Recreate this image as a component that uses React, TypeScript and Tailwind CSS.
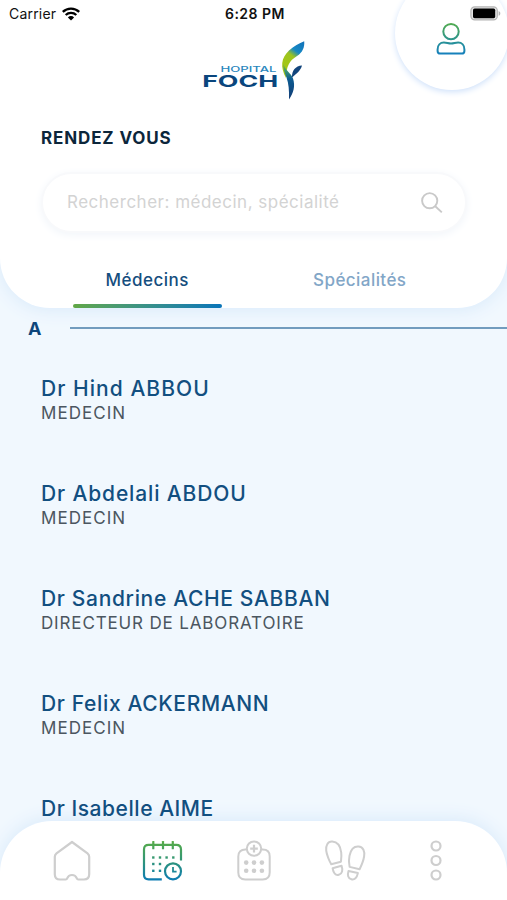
interface Doctor {
  name: string;
  role: string;
  nameClass: string;
  roleClass: string;
}

const doctors: Doctor[] = [
  { name: 'Dr Hind ABBOU', role: 'MEDECIN', nameClass: 'tracking-[1.05px]', roleClass: 'tracking-[1.05px]' },
  { name: 'Dr Abdelali ABDOU', role: 'MEDECIN', nameClass: 'tracking-[0.86px]', roleClass: 'tracking-[1.05px]' },
  { name: 'Dr Sandrine ACHE SABBAN', role: 'DIRECTEUR DE LABORATOIRE', nameClass: 'tracking-[0.66px]', roleClass: 'tracking-[0.85px]' },
  { name: 'Dr Felix ACKERMANN', role: 'MEDECIN', nameClass: 'tracking-[0.64px]', roleClass: 'tracking-[1.05px]' },
  { name: 'Dr Isabelle AIME', role: 'MEDECIN', nameClass: 'tracking-[0.54px]', roleClass: 'tracking-[1.05px]' },
];

function WifiIcon() {
  return (
    <svg width="18" height="14" viewBox="0 0 18 14" fill="none" stroke="#000" strokeWidth="2.3">
      <path d="M0.8 4.9a11.7 11.7 0 0 1 16.4 0" />
      <path d="M3.7 8a7.6 7.6 0 0 1 10.6 0" />
      <path d="M9 13.6L5.9 10.4a4.4 4.4 0 0 1 6.2 0z" fill="#000" stroke="none" />
    </svg>
  );
}

function BatteryIcon() {
  return (
    <svg width="31" height="15" viewBox="0 0 31 15">
      <rect x="0.9" y="0.9" width="26.4" height="13" rx="3.8" fill="#e4e4e4" stroke="#b4b4b4" strokeWidth="1.2" />
      <rect x="3" y="2.6" width="22.2" height="9.6" rx="1.6" fill="#000" />
      <path d="M28.6 5v4.8c1-.4 1.7-1.3 1.7-2.4s-.7-2-1.7-2.4z" fill="#b4b4b4" />
    </svg>
  );
}

function FochLogo() {
  return (
    <svg width="106" height="62" viewBox="0 0 106 62" role="img" aria-label="Hopital Foch">
      <defs>
        <linearGradient id="leaf" x1="84" y1="28" x2="103" y2="3" gradientUnits="userSpaceOnUse">
          <stop offset="0" stopColor="#a5c715" />
          <stop offset="0.42" stopColor="#9cc41f" />
          <stop offset="0.62" stopColor="#1689c4" />
          <stop offset="1" stopColor="#1272b9" />
        </linearGradient>
        <linearGradient id="stem" x1="86" y1="22" x2="90" y2="58" gradientUnits="userSpaceOnUse">
          <stop offset="0" stopColor="#a5c715" />
          <stop offset="0.25" stopColor="#3f9b70" />
          <stop offset="0.5" stopColor="#0d5c92" />
          <stop offset="1" stopColor="#123f78" />
        </linearGradient>
      </defs>
      <text x="19.500" y="33.300" textLength="56" lengthAdjust="spacingAndGlyphs" fontFamily="Inter, sans-serif" fontSize="7.800" fontWeight="500" fill="#2a87bd">
        HOPITAL
      </text>
      <text x="1.200" y="47.700" textLength="76" lengthAdjust="spacingAndGlyphs" fontFamily="Inter, sans-serif" fontSize="16" fontWeight="700" fill="#0a467d">
        FOCH
      </text>
      {/* leaf, stem and side leaf */}
      <path d="M85 39C79 28 80 19 88 11.500 93 7 98 4.500 103.200 2.200c.6 6-1.700 11.300-7.200 14.800C88 22 85.500 27 85 39z" fill="url(#leaf)" />
      <path d="M82 24c.5 7 2 10.500 3.500 14.500 2.200 6 2.800 13 2.500 22C92.500 54 94.500 47 92 39.500 90 34 84 31.500 82 24z" fill="url(#stem)" />
      <path d="M91 38.500c-.3-7 3.500-11.500 10-12-1.600 5.500-5 7.500-10 12z" fill="#12457c" />
    </svg>
  );
}

function UserIcon() {
  return (
    <svg width="30" height="33" viewBox="0 0 30 33" fill="none" stroke="url(#user-grad)" strokeWidth="2">
      <defs>
        <linearGradient id="user-grad" x1="0" y1="0" x2="0" y2="33" gradientUnits="userSpaceOnUse">
          <stop offset="0" stopColor="#55ad4b" />
          <stop offset="0.65" stopColor="#258f9c" />
          <stop offset="1" stopColor="#147fc0" />
        </linearGradient>
      </defs>
      <circle cx="15" cy="9.600" r="7.700" />
      <path d="M4.300 31.500h21.400c1.700 0 2.700-1 2.700-2.600v-1.500c0-4-2.600-6.900-6.300-6.900-2.900 0-4.200 1-7.100 1s-4.200-1-7.100-1c-3.700 0-6.300 2.900-6.300 6.900v1.500c0 1.600 1 2.600 2.700 2.600z" />
    </svg>
  );
}

function SearchIcon() {
  return (
    <svg width="22" height="22" viewBox="0 0 22 22" fill="none" stroke="#c9c9c9" strokeWidth="1.900">
      <circle cx="8.700" cy="8.700" r="7.600" />
      <path d="M14 14l6.800 6.400" />
    </svg>
  );
}

function HomeIcon() {
  return (
    <svg width="38" height="42" viewBox="0 0 38 42" fill="none" stroke="#cecece" strokeWidth="2.200" strokeLinejoin="round">
      <path d="M19 2L34.500 13.300c1.300 1 1.700 2 1.700 3.500v17.500c0 3.500-1.800 5.200-5.200 5.200h-5.700c-1 0-1.300-.5-1.600-1.300-.8-2.100-2.400-3.200-4.700-3.200s-3.900 1.100-4.700 3.200c-.3.800-.6 1.300-1.600 1.300H7c-3.400 0-5.200-1.700-5.200-5.200V16.800c0-1.500.4-2.500 1.700-3.500z" />
    </svg>
  );
}

function CalendarIcon() {
  return (
    <svg width="42" height="42" viewBox="0 0 42 42" fill="none" stroke="url(#cal-grad)" strokeWidth="2.200">
      <defs>
        <linearGradient id="cal-grad" x1="0" y1="0" x2="0" y2="42" gradientUnits="userSpaceOnUse">
          <stop offset="0" stopColor="#5aad45" />
          <stop offset="0.5" stopColor="#309579" />
          <stop offset="1" stopColor="#0879b8" />
        </linearGradient>
      </defs>
      <path d="M39 20.500V9.500c0-3-1.600-4.600-4.600-4.600H6.600C3.600 4.900 2 6.500 2 9.500v25.300c0 3 1.600 4.600 4.600 4.600h13.200" />
      <g fill="url(#cal-grad)" stroke="none">
        {[11.300, 21, 30.800].map((x) => (
          <rect key={x} x={x - 1.100} y="1" width="2.200" height="8.300" rx="0.600" />
        ))}
        {[17.500, 24, 30.800].map((y) =>
          [11.300, 18, 24.600, 31.300].filter((x) => y < 20 || x < 20).map((x) => (
            <rect key={`${x}-${y}`} x={x - 1.200} y={y - 1.200} width="2.400" height="2.400" />
          )),
        )}
      </g>
      <circle cx="31" cy="31.300" r="8" />
      <path d="M31 27v4.600h3.600" strokeWidth="1.800" />
    </svg>
  );
}

function HospitalIcon() {
  return (
    <svg width="34" height="42" viewBox="0 0 34 42" fill="none" stroke="#cecece" strokeWidth="2">
      <path d="M9.600 9.500H8.300C4 9.500 1.300 12 1.300 16.400v16.200c0 4.400 2.700 6.900 7 6.900h17.400c4.300 0 7-2.500 7-6.900V16.400c0-4.400-2.700-6.900-7-6.900h-1.300" />
      <circle cx="17" cy="8.600" r="7.200" />
      <path d="M17 4.800v7.600M13.200 8.600h7.600" strokeWidth="2.200" />
      <g fill="#cecece" stroke="none">
        {[22.600, 30.800].map((y) => [9.200, 17, 24.900].map((x) => <circle key={`${x}-${y}`} cx={x} cy={y} r="2.300" />))}
      </g>
    </svg>
  );
}

function StepsIcon() {
  return (
    <svg width="42" height="42" viewBox="0 0 42 42" fill="none" stroke="#cecece" strokeWidth="2" strokeLinejoin="round">
      <path d="M8.200 1.600C3.600 1.300 1.600 5.800 2.200 10.500c.4 3.600 1.300 5.300 2.500 8.500.6 1.800 1.500 3.400 2.500 5.200l9.700-2.500c.4-3.300.8-5.500.3-9.300C16.500 6.500 13.300 2 8.200 1.600z" />
      <path d="M8.600 28.200l8.900-2.500c1.500 4.300.9 8-2.700 9-3.400.9-5.300-1.500-6.200-6.500z" />
      <path d="M34.500 6.500c4.800.3 6.500 5 5.600 10-.6 3.800-2.500 8.600-4.500 12.700l-10-2.300c-.9-3.900-1-7.300-.1-11.200C26.700 10 30 6.200 34.500 6.500z" />
      <path d="M24.500 31l9.400 2.100c-1 4.700-3.300 7-6.500 6.200-3.600-.8-4.100-4.400-2.900-8.300z" />
    </svg>
  );
}

function MoreIcon() {
  return (
    <svg width="14" height="42" viewBox="0 0 14 42" fill="none" stroke="#cecece" strokeWidth="2.200">
      <circle cx="7" cy="6" r="4.500" />
      <circle cx="7" cy="20.500" r="4.500" />
      <circle cx="7" cy="35" r="4.500" />
    </svg>
  );
}

function Header() {
  return (
    <header className="relative flex h-[308px] shrink-0 flex-col rounded-b-[50px] bg-white shadow-[0_2px_18px_#d9eafb]">
      {/* profile bubble */}
      <button
        className="absolute -top-[24px] left-[395px] flex size-[114px] items-end justify-center rounded-full bg-white pr-[2px] pb-[35px] shadow-[0_2px_6px_#cfe1fa]"
        aria-label="Profil"
      >
        <UserIcon />
      </button>

      {/* status bar */}
      <div className="relative flex h-[27px] items-center justify-between pr-[6px] pl-[9px] text-[14px] text-[#111]">
        <div className="flex w-[120px] items-center gap-[6px]">
          <span className="tracking-[0.2px]">Carrier</span>
          <WifiIcon />
        </div>
        <span className="font-semibold tracking-[0.5px]">6:28 PM</span>
        <div className="flex w-[120px] justify-end">
          <BatteryIcon />
        </div>
      </div>

      <div className="mt-[12px] ml-[201px]">
        <FochLogo />
      </div>

      <h1 className="mt-[25px] ml-[41px] text-[17px] leading-[24px] font-bold tracking-[0.86px] text-[#0c263b]">RENDEZ VOUS</h1>

      <div className="mr-[40px] ml-[41px] mt-[22px] flex h-[61px] shrink-0 items-center justify-between rounded-full border-2 border-[#f8f9fb] bg-white pr-[22px] pl-[24px] shadow-[0_2px_8px_#f1f5fa]">
        <span className="text-[17px] tracking-[0.5px] text-[#d3d3d3]">Rechercher: médecin, spécialité</span>
        <SearchIcon />
      </div>

      <div className="mx-[41px] mt-auto flex text-[17px]">
        <div className="flex w-[213px] flex-col items-center">
          <span className="leading-[24px] font-medium tracking-[0.5px] text-[#154e7e]">Médecins</span>
          <span className="mt-[12px] h-[4px] w-[149px] rounded-full bg-linear-to-r from-[#61a744] to-[#0874b9]" />
        </div>
        <div className="flex w-[213px] justify-center leading-[24px] font-medium tracking-[0.44px] text-[#82a6c7]">Spécialités</div>
      </div>
    </header>
  );
}

export default function App() {
  return (
    <div className="flex h-[900px] w-[507px] flex-col overflow-hidden bg-[#f1f8fe] font-[Inter,sans-serif]">
      <Header />

      {/* above the header and nav shadows, clipped to its own box */}
      <main className="relative z-10 min-h-0 flex-1 overflow-hidden">
        <div className="flex h-[40px] items-center">
          <span className="w-[70px] pl-[28px] text-[18px] font-bold text-[#0d467b]">A</span>
          <span className="h-[2px] flex-1 bg-[#729cbe]" />
        </div>
        <ul className="pt-[26px] pl-[41px]">
          {doctors.map((d) => (
            <li key={d.name} className="h-[105px]">
              <p className={`text-[21px] leading-[29px] font-medium text-[#124f80] ${d.nameClass}`}>{d.name}</p>
              <p className={`text-[17px] leading-[21px] text-[#4b5660] ${d.roleClass}`}>{d.role}</p>
            </li>
          ))}
        </ul>
      </main>

      <nav className="flex h-[79px] shrink-0 items-center rounded-t-[52px] bg-white px-[26px] shadow-[0_-2px_18px_#d9eafb]">
        <a className="flex w-[91px] justify-center"><HomeIcon /></a>
        <a className="flex w-[91px] justify-center"><CalendarIcon /></a>
        <a className="flex w-[91px] justify-center"><HospitalIcon /></a>
        <a className="flex w-[91px] justify-center"><StepsIcon /></a>
        <a className="flex w-[91px] justify-center"><MoreIcon /></a>
      </nav>
    </div>
  );
}
